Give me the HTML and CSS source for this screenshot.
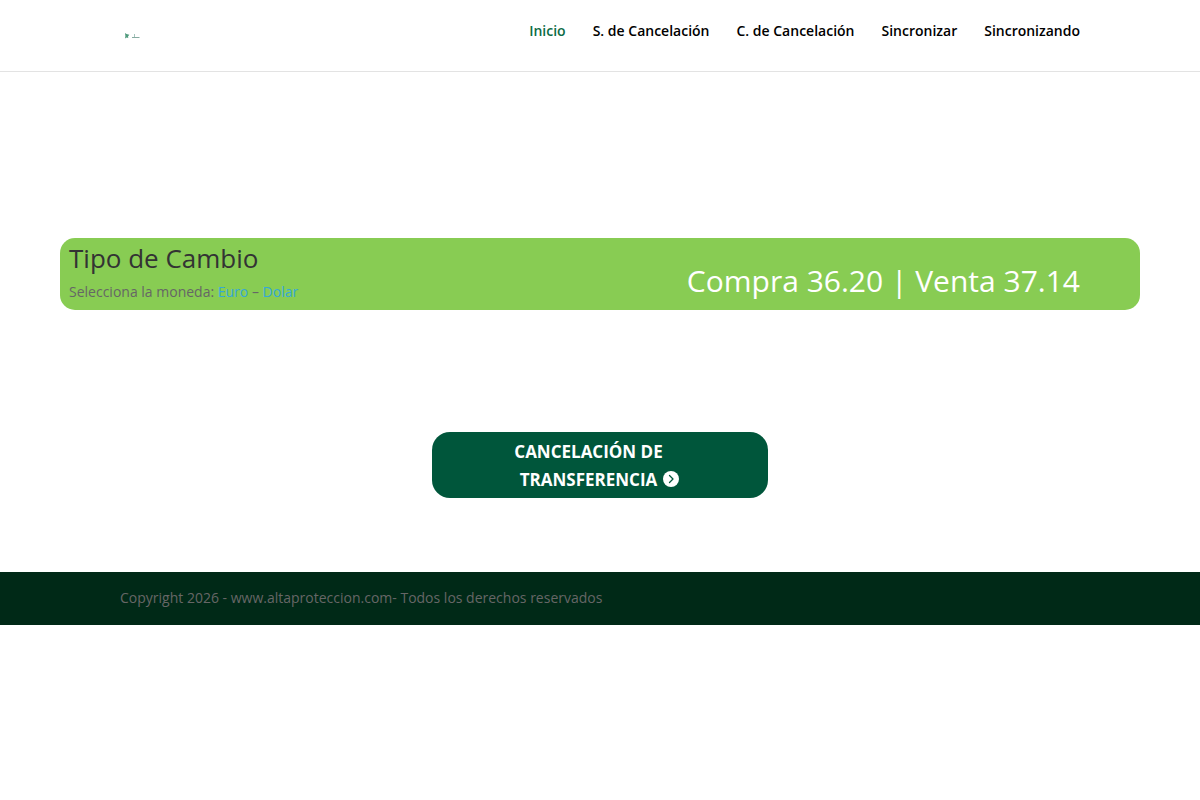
FILE: index.html
```html
<!DOCTYPE html>
<html lang="es">
<head>
    <meta charset="UTF-8">
    <meta name="viewport" content="width=device-width, initial-scale=1.0">
    <title>Inicio</title>
    <link rel="stylesheet" href="styles.css">
</head>
<body>

    <header class="header">
        <div class="container header-row">
            <a class="logo" href="#" aria-label="Inicio">
                <svg width="24" height="10" viewBox="0 0 24 10">
                    <path d="M5 2l1.500 1 2.800.700-1.300 1.800.3 1.500-1.800-.5L5 7.500l.4-2.500z" fill="#4f9a7c"/>
                    <path d="M14.500 3v3" stroke="#a5c4bc" stroke-width="1"/>
                    <path d="M12 6.500h7.500" stroke="#86aaa0" stroke-width="1"/>
                </svg>
            </a>
            <nav class="nav">
                <a class="active" href="#">Inicio</a>
                <a href="#">S. de Cancelación</a>
                <a href="#">C. de Cancelación</a>
                <a href="#">Sincronizar</a>
                <a href="#">Sincronizando</a>
            </nav>
        </div>
    </header>

    <main class="main">
        <section class="exchange">
            <div class="exchange-info">
                <h2>Tipo de Cambio</h2>
                <p>Selecciona la moneda: <a href="#">Euro</a> – <a href="#">Dolar</a></p>
            </div>
            <div class="exchange-rate">Compra 36.20 | Venta 37.14</div>
        </section>

        <a class="cancel-button" href="#">
            CANCELACIÓN DE<br>
            TRANSFERENCIA<svg class="arrow" width="16" height="16" viewBox="0 0 16 16" aria-hidden="true">
                <circle cx="8" cy="8" r="8" fill="#fff"/>
                <path d="M6.500 4.500L10 8l-3.500 3.500" fill="none" stroke="#00563b" stroke-width="1.300" stroke-linecap="round" stroke-linejoin="round"/>
            </svg>
        </a>
    </main>

    <footer class="footer">
        <div class="container">Copyright 2026 - www.altaproteccion.com- Todos los derechos reservados</div>
    </footer>

</body>
</html>
```

FILE: styles.css
```css
* {
    box-sizing: border-box;
}
body {
    margin: 0;
    background: #fff;
    color: #666;
    font-family: "Open Sans", Arial, sans-serif;
    font-size: 14px;
    line-height: 24px;
}
a {
    color: #2ea3f2;
    text-decoration: none;
}
.container {
    width: 80%;
    margin: 0 auto;
}
.header {
    border-bottom: 1px solid #e3e3e3;
}
.header-row {
    display: flex;
    justify-content: space-between;
    align-items: flex-start;
    padding: 19px 0 28px;
}
.logo {
    display: flex;
    padding-top: 12px;
}
.nav {
    display: flex;
    flex-wrap: wrap;
    gap: 27px;
}
.nav a {
    color: #000;
    font-weight: 600;
}
.nav .active {
    color: #0c6b45;
}
.main {
    display: flex;
    flex-direction: column;
    align-items: center;
    padding: 166px 5% 74px;
}
.exchange {
    display: flex;
    justify-content: space-between;
    width: 100%;
    margin-bottom: 122px;
    padding: 7px 60px 6px 9px;
    border-radius: 15px;
    background: #88cc53;
}
.exchange h2 {
    margin: 0 0 9px;
    color: #333;
    font-size: 26px;
    font-weight: 400;
    line-height: 26px;
}
.exchange p {
    margin: 0;
}
.exchange a {
    color: #35a8d8;
}
.exchange-rate {
    padding-top: 21px;
    color: #fff;
    font-size: 30px;
    line-height: 30px;
}
.cancel-button {
    padding: 6px 105px 4px 82px;
    border-radius: 18px;
    background: #00563b;
    color: #fff;
    font-size: 17px;
    font-weight: 700;
    line-height: 28px;
    text-align: center;
}
/* the arrow hangs after the last word, so the text stays centered */
.arrow {
    margin: 0 -22px 0 6px;
    vertical-align: -1px;
}
.footer {
    padding: 14px 0 15px;
    background: #002917;
}
```
